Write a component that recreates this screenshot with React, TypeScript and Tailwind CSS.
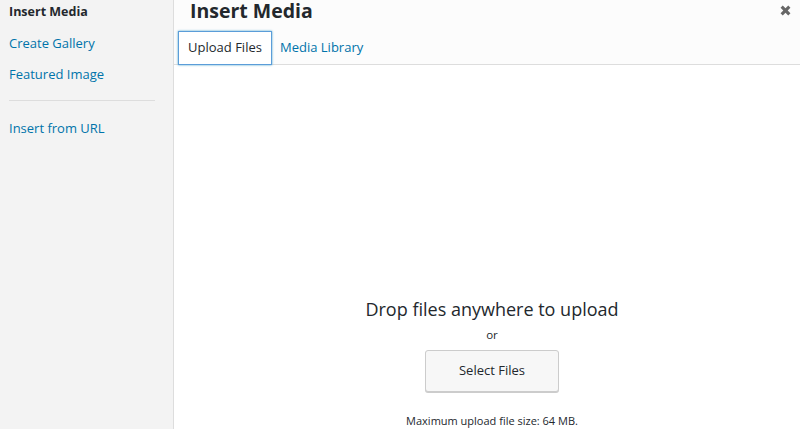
import React from "react"

const FONT = { fontFamily: '"Open Sans", "Noto Sans", sans-serif' }

const menu = [
  { label: "Create Gallery" },
  { label: "Featured Image" },
]

function CloseIcon() {
  return (
    <svg width="11" height="11" viewBox="0 0 20 20" className="text-[#666]">
      <path
        d="M1 5 5 1 10 6 15 1 19 5 14 10 19 15 15 19 10 14 5 19 1 15 6 10z"
        fill="currentColor"
      />
    </svg>
  )
}

export default function App() {
  return (
    <div className="flex h-[429px] w-[800px] overflow-hidden bg-white text-[#23282d]" style={FONT}>
      {/* left menu */}
      <aside className="flex w-[174px] shrink-0 flex-col border-r border-[#dddddd] bg-[#f3f3f3] pl-[9px] pr-[18px]">
        <div className="mt-[2px] h-[20px] text-[12.5px] font-bold leading-[20px]">Insert Media</div>
        {menu.map((m) => (
          <a key={m.label} className="mt-[11px] block h-[20px] text-[13px] leading-[20px] text-[#0073aa]">
            {m.label}
          </a>
        ))}
        <div className="mt-[16px] h-px bg-[#dddddd]" />
        <a className="mt-[17px] block h-[20px] text-[13px] leading-[20px] text-[#0073aa]">Insert from URL</a>
      </aside>

      {/* main frame */}
      <main className="flex min-w-0 flex-1 flex-col">
        <header className="relative h-[65px] border-b border-[#dddddd] bg-[#fcfcfc]">
          <h1 className="ml-[16px] mt-[-3px] h-[28px] text-[19.5px] font-bold leading-[28px]">Insert Media</h1>
          <button type="button" className="absolute right-[9px] top-[5px] flex h-[11px] w-[11px] items-center justify-center">
            <CloseIcon />
          </button>
          <nav className="ml-[4px] mt-[6px] flex items-end">
            <div className="flex h-[34px] w-[94px] items-center justify-center border border-[#5b9dd9] bg-white text-[13px] text-[#23282d] shadow-[0_0_2px_rgba(30,140,190,0.8)]">
              Upload Files
            </div>
            <div className="flex h-[34px] items-center px-[8px] text-[13px] text-[#0073aa]">Media Library</div>
          </nav>
        </header>

        <section className="flex flex-1 flex-col items-center pl-[10px] pt-[232px]">
          <p className="text-[18px] leading-[24px] text-[#23282d]">Drop files anywhere to upload</p>
          <p className="mt-[6px] text-[11.5px] leading-[16px] text-[#23282d]">or</p>
          <button
            type="button"
            className="mt-[7px] h-[42px] w-[134px] rounded-[3px] border border-[#cccccc] bg-[#f7f7f7] text-[13px] text-[#23282d] shadow-[0_1px_0_#cccccc]"
          >
            Select Files
          </button>
          <p className="mt-[21px] text-[11px] leading-[16px] text-[#23282d]">Maximum upload file size: 64 MB.</p>
        </section>
      </main>
    </div>
  )
}
